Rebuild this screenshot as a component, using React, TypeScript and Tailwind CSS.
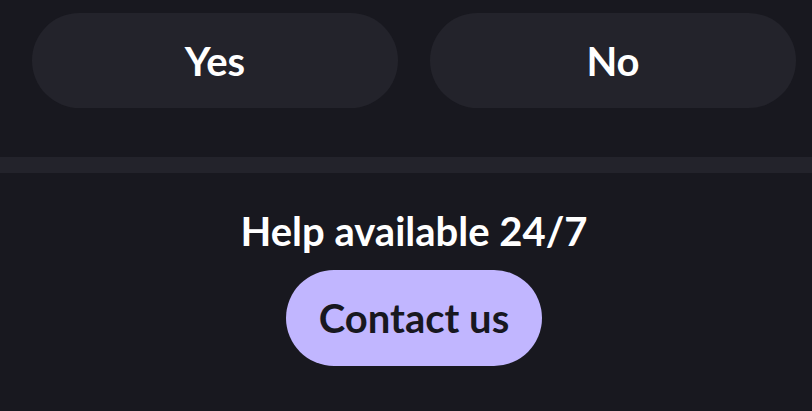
export default function App() {
  return (
    <div className="w-[812px] h-[411px] overflow-hidden bg-[#18181f] font-['Lato',sans-serif]">
      {/* Answer buttons */}
      <div className="flex gap-8 pl-8 pr-4 pt-[13px]">
        <button className="flex-1 h-[95px] rounded-full bg-[#23232b] text-white text-[40px] font-bold">
          Yes
        </button>
        <button className="flex-1 h-[95px] rounded-full bg-[#23232b] text-white text-[40px] font-bold">
          No
        </button>
      </div>

      <div className="mt-[49px] h-4 bg-[#23232b]" />

      {/* Help */}
      <div className="flex flex-col items-center pl-4 pt-[36px]">
        <h3 className="text-white text-[40px] font-bold leading-[44px]">Help available 24/7</h3>
        <button className="mt-[17px] w-[256px] h-[96px] rounded-full bg-[#c1b6ff] text-[#18181f] text-[40px] font-bold">
          Contact us
        </button>
      </div>
    </div>
  )
}
